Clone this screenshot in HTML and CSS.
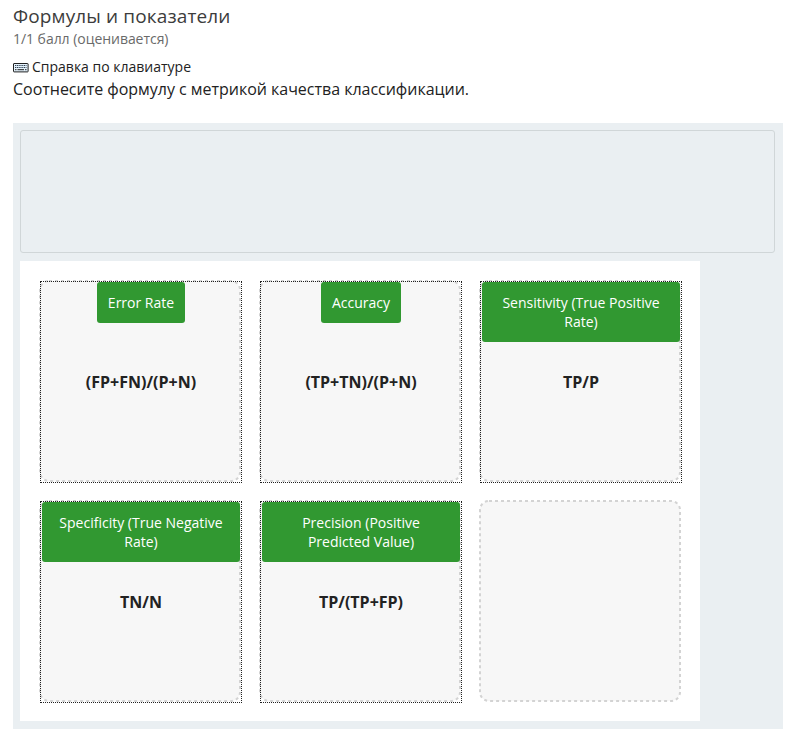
FILE: index.html
```html
<!DOCTYPE html>
<html lang="ru">
<head>
<meta charset="utf-8">
<title>Формулы и показатели</title>
<link rel="stylesheet" href="styles.css">
</head>
<body>
<h3 class="title">Формулы и показатели</h3>
<div class="progress">1/1 балл (оценивается)</div>
<button class="help"><svg class="kbd" viewBox="0 0 16 10" width="16" height="10"><rect x=".5" y=".5" width="14.6" height="8.4" rx=".5" fill="#e4f2fc" stroke="#222" stroke-width="1"/><path d="M2 2.5h11.5M2 4.5h11.5" stroke="#345" stroke-width="1" stroke-dasharray="1.2 .6"/><path d="M2 6.7h1.5M4.5 6.7h6.5M12 6.7h1.5" stroke="#222" stroke-width="1"/></svg>Справка по клавиатуре</button>
<p class="question">Соотнесите формулу с метрикой качества классификации.</p>
<main class="container">
<div class="bank"></div>
<div class="target">
<div class="zone"><svg class="frame" width="202" height="202"><rect x="1" y="1" width="200" height="200" rx="9"/></svg><div class="item">Error Rate</div><b class="formula">(FP+FN)/(P+N)</b></div>
<div class="zone"><svg class="frame" width="202" height="202"><rect x="1" y="1" width="200" height="200" rx="9"/></svg><div class="item">Accuracy</div><b class="formula">(TP+TN)/(P+N)</b></div>
<div class="zone"><svg class="frame" width="202" height="202"><rect x="1" y="1" width="200" height="200" rx="9"/></svg><div class="item wide">Sensitivity (True Positive Rate)</div><b class="formula">TP/P</b></div>
<div class="zone"><svg class="frame" width="202" height="202"><rect x="1" y="1" width="200" height="200" rx="9"/></svg><div class="item wide">Specificity (True Negative Rate)</div><b class="formula">TN/N</b></div>
<div class="zone"><svg class="frame" width="202" height="202"><rect x="1" y="1" width="200" height="200" rx="9"/></svg><div class="item wide">Precision (Positive Predicted Value)</div><b class="formula">TP/(TP+FP)</b></div>
<div class="zone empty"><svg class="frame" width="202" height="202"><rect x="1" y="1" width="200" height="200" rx="9"/></svg></div>
</div>
</main>
</body>
</html>
```
FILE: styles.css
```css
* { box-sizing: border-box; }
body { margin: 0; padding: 4px 12px 0 13px; background: #fff; color: #222; font-family: "Open Sans", sans-serif; }
.title { margin: 0; font-size: 19px; line-height: 25px; font-weight: 400; letter-spacing: .13px; color: #3c3c3c; }
.progress { font-size: 14px; line-height: 20px; letter-spacing: -.04px; color: #6a6a6a; }
.help { display: flex; align-items: center; gap: 3px; margin: 8px 0 0; padding: 0; border: 0; background: none; color: #222; font: 14px/20px "Open Sans", sans-serif; }
.kbd { position: relative; top: 1px; }
.question { margin: 0; font-size: 16px; line-height: 24px; letter-spacing: -.02px; }
.container { height: 606px; margin-top: 22px; padding: 7px 8px 8px 7px; background: #eaeff2; }
.bank { height: 123px; border: 1px solid #d0d6d8; border-radius: 3px; }
.target { display: grid; grid-template-columns: repeat(3, 202px); grid-template-rows: repeat(2, 202px); gap: 18px; width: 680px; height: 460px; margin-top: 8px; padding: 20px; background: #fff; }
.zone { position: relative; display: flex; justify-content: center; align-items: flex-start; }
.zone::after { content: ""; position: absolute; inset: 0; border: 1px dotted #222; }
.empty::after { display: none; }
.frame { position: absolute; top: -1px; left: -1px; }
.frame rect { fill: #f7f7f7; stroke: #d3d3d3; stroke-width: 2px; stroke-dasharray: 3px 3px; }
.item { position: relative; margin-top: 1px; padding: 10px; border: 1px solid transparent; border-radius: 3px; background: #319831; color: #fff; font-size: 14px; line-height: 19px; text-align: center; }
.wide { width: 198px; }
.formula { position: absolute; top: 89px; left: 0; right: 0; text-align: center; font-size: 16px; line-height: 24px; }
```
